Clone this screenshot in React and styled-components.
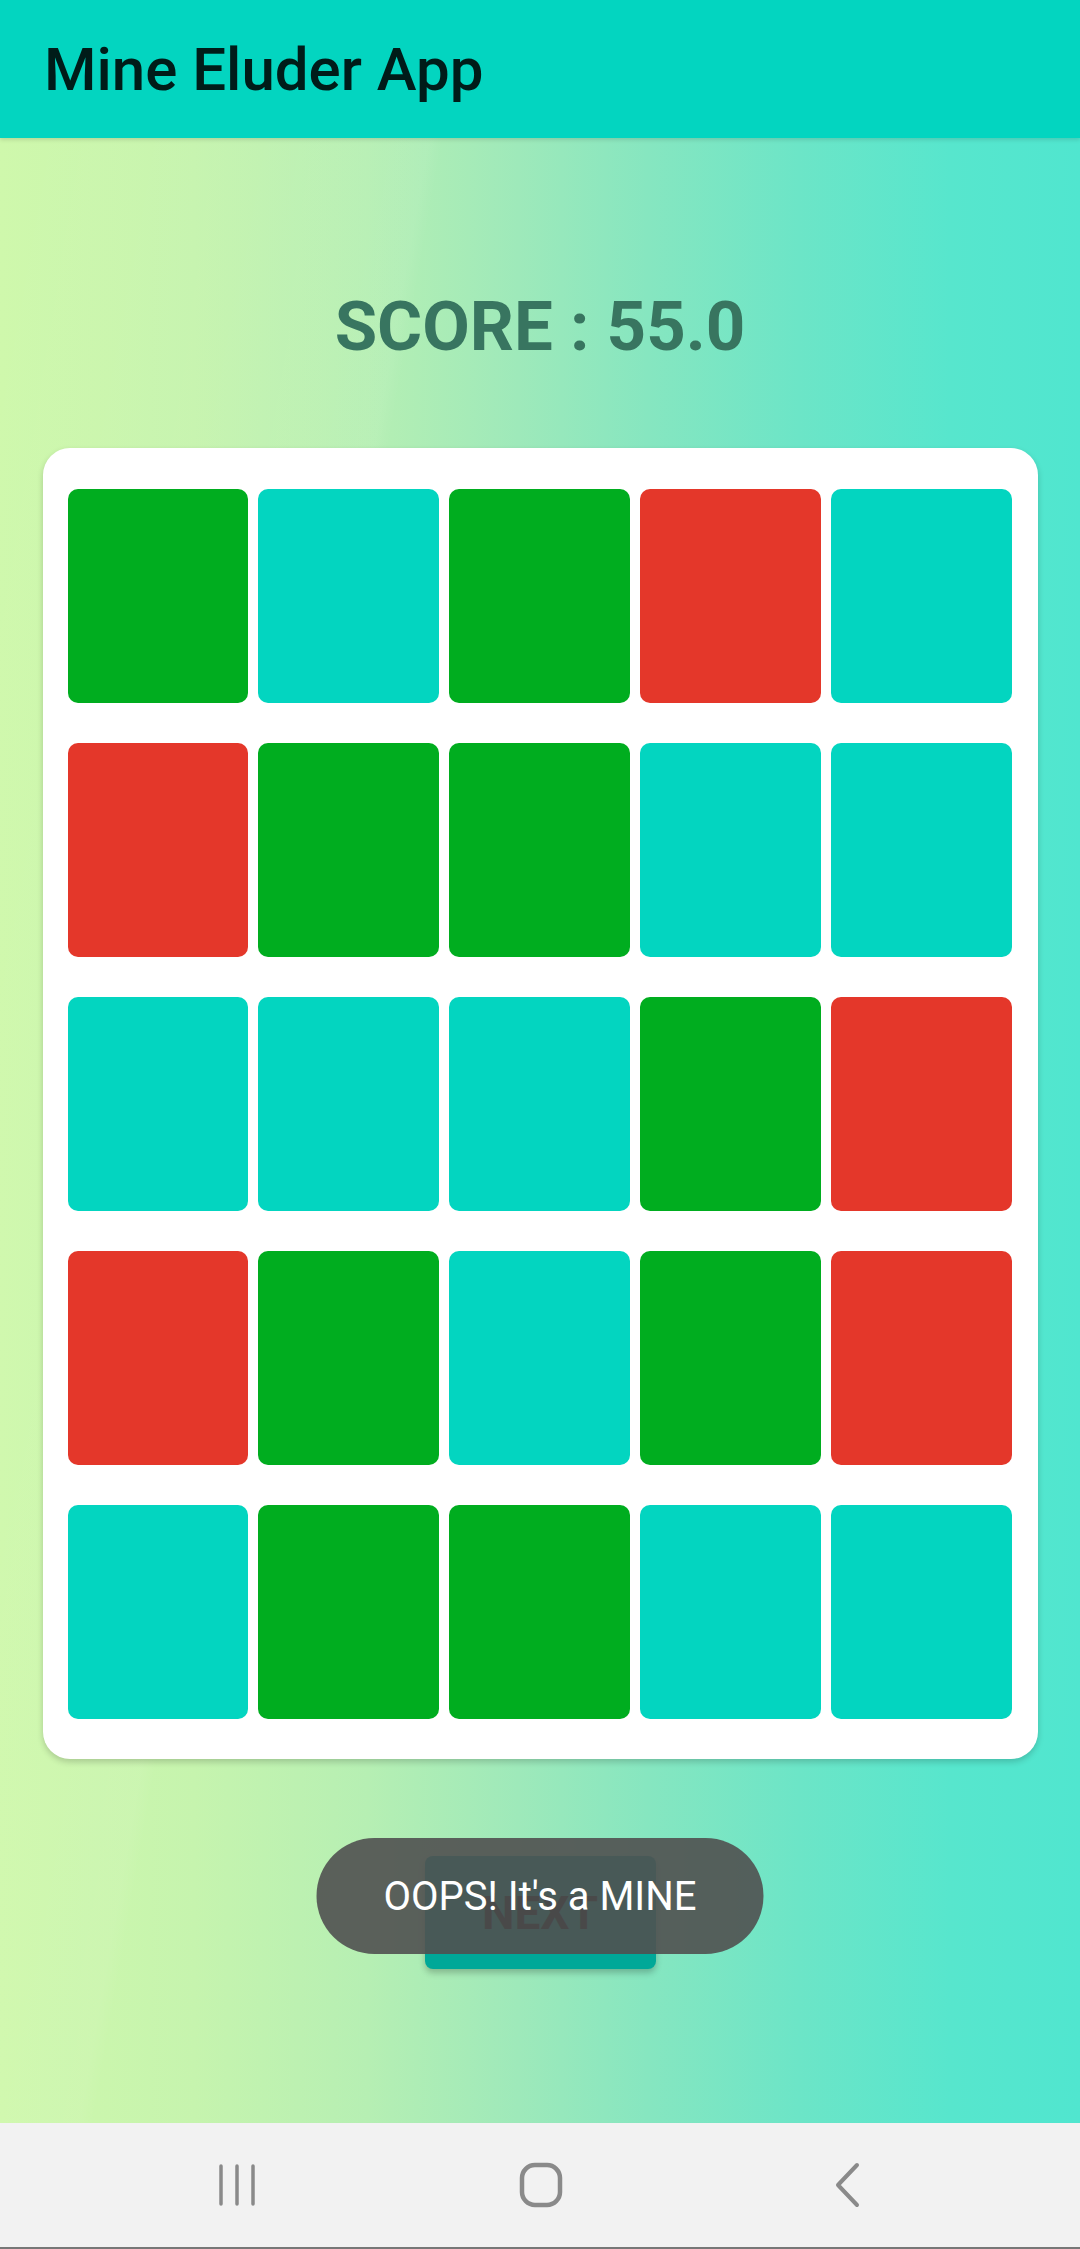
import { createGlobalStyle, styled } from "styled-components";

const GREEN = "#00ad1f";
const CYAN = "#03d5c0";
const RED = "#e4372a";

// g = safe (green), c = hidden, r = mine
const board = [
  ["g", "c", "g", "r", "c"],
  ["r", "g", "g", "c", "c"],
  ["c", "c", "c", "g", "r"],
  ["r", "g", "c", "g", "r"],
  ["c", "g", "g", "c", "c"],
];

const tileColor = { g: GREEN, c: CYAN, r: RED };

const GlobalStyle = createGlobalStyle`
  * {
    box-sizing: border-box;
  }
  body {
    margin: 0;
    font-family: Roboto, "Noto Sans", sans-serif;
  }
  #root {
    min-height: 2249px;
    display: flex;
  }
`;

const App = () => {
  return (
    <>
      <GlobalStyle />
      <StScreen>
        <StAppBar>
          <StTitle>Mine Eluder App</StTitle>
        </StAppBar>

        <StMain>
          <StScore>SCORE : 55.0</StScore>

          <StCard>
            {board.flat().map((cell, i) => (
              <StTile key={i} $color={tileColor[cell]} />
            ))}
          </StCard>

          <StNextBtn>NEXT</StNextBtn>

          <StToast>OOPS! It's a MINE</StToast>
        </StMain>

        <StNavBar>
          <StNavBtn>
            <svg width="40" height="44" viewBox="0 0 40 44">
              <g stroke="#8a8a8a" strokeWidth="3.5" strokeLinecap="round">
                <line x1="3" y1="3" x2="3" y2="41" />
                <line x1="19" y1="3" x2="19" y2="41" />
                <line x1="35" y1="3" x2="35" y2="41" />
              </g>
            </svg>
          </StNavBtn>
          <StNavBtn>
            <svg width="46" height="48" viewBox="0 0 46 48">
              <rect
                x="4"
                y="4"
                width="38"
                height="40"
                rx="13"
                fill="none"
                stroke="#8a8a8a"
                strokeWidth="4.5"
              />
            </svg>
          </StNavBtn>
          <StNavBtn>
            <svg width="30" height="46" viewBox="0 0 30 46">
              <polyline
                points="25,3 6,23 25,43"
                fill="none"
                stroke="#8a8a8a"
                strokeWidth="4"
                strokeLinecap="round"
                strokeLinejoin="round"
              />
            </svg>
          </StNavBtn>
        </StNavBar>
      </StScreen>
    </>
  );
};

const StScreen = styled.div`
  flex: 1;
  display: flex;
  flex-direction: column;
  min-height: 2249px;
`;

const StAppBar = styled.header`
  height: 138px;
  flex-shrink: 0;
  display: flex;
  align-items: center;
  padding-left: 44px;

  background-color: ${CYAN};
  box-shadow: 0 2px 4px rgba(0, 0, 0, 0.12);
  position: relative;
  z-index: 1;
`;

const StTitle = styled.h1`
  margin: 0;

  font-family: Roboto, sans-serif;
  font-size: 60px;
  font-weight: 500;
  color: #001c19;
`;

const StMain = styled.main`
  flex: 1;
  position: relative;
  display: flex;
  flex-direction: column;
  align-items: center;

  background:
    linear-gradient(
      100deg,
      rgba(255, 255, 255, 0) 0%,
      rgba(255, 255, 255, 0.05) 30%,
      rgba(255, 255, 255, 0) 31%
    ),
    linear-gradient(
      90deg,
      #cff8ac 0%,
      #c6f4ae 18%,
      #b6efb3 34%,
      #9ee9ba 48%,
      #86e6c0 60%,
      #6ce5c7 74%,
      #57e6cd 88%,
      #50e6cf 100%
    );
`;

const StScore = styled.h2`
  margin: 148px 0 0;

  font-family: Roboto, sans-serif;
  font-size: 69px;
  font-weight: 700;
  line-height: normal;
  color: #387560;
`;

const StCard = styled.section`
  width: 995px;
  margin-top: 81px;
  padding: 41px 26px 40px 25px;

  display: grid;
  grid-template-columns: repeat(5, 1fr);
  grid-auto-rows: 214px;
  column-gap: 10px;
  row-gap: 40px;

  background-color: #fff;
  border-radius: 27px;
  box-shadow: 0 3px 6px rgba(0, 0, 0, 0.18);
`;

const StTile = styled.div`
  background-color: ${({ $color }) => $color};
  border-radius: 10px;
`;

const StNextBtn = styled.button`
  width: 231px;
  height: 113px;
  margin-top: 97px;

  border: none;
  border-radius: 8px;
  background-color: #00a898;
  box-shadow: 0 4px 6px rgba(0, 0, 0, 0.22);

  font-family: Roboto, sans-serif;
  font-size: 46px;
  font-weight: 700;
  color: #111;
`;

const StToast = styled.div`
  position: absolute;
  top: 1700px;
  left: 50%;
  transform: translateX(-50%);

  width: 447px;
  height: 116px;
  display: flex;
  align-items: center;
  justify-content: center;

  border-radius: 58px;
  background-color: rgba(80, 80, 80, 0.9);

  font-family: Roboto, sans-serif;
  font-size: 40px;
  color: #fff;
  white-space: nowrap;
`;

const StNavBar = styled.nav`
  height: 126px;
  flex-shrink: 0;
  display: grid;
  grid-template-columns: 218px 40px 260px 46px 268px 30px;
  align-items: center;

  background-color: #f2f2f2;
  border-bottom: 2px solid #777;

  & > :nth-child(1) {
    grid-column: 2;
  }
  & > :nth-child(2) {
    grid-column: 4;
  }
  & > :nth-child(3) {
    grid-column: 6;
  }
`;

const StNavBtn = styled.div`
  display: flex;
  align-items: center;
  justify-content: center;
`;

export default App;
